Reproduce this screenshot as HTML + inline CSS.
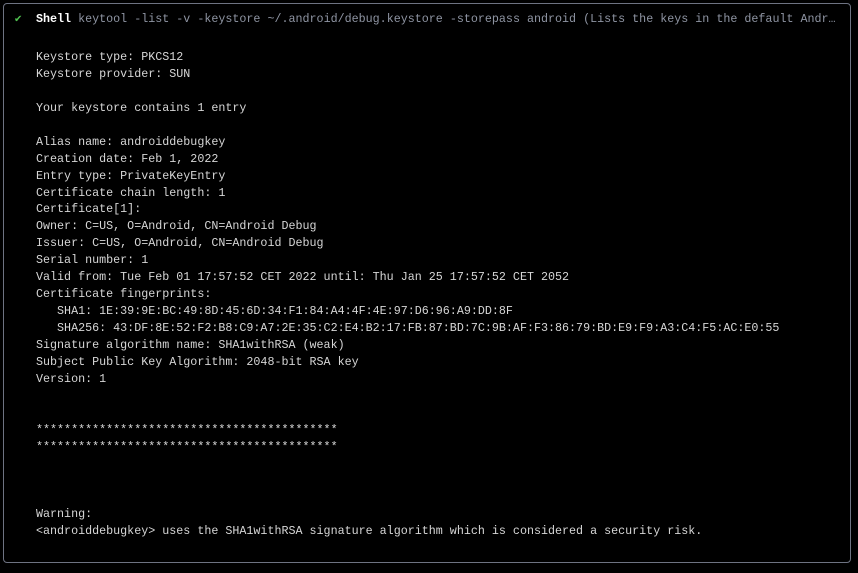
<!DOCTYPE html>
<html><head><meta charset="utf-8"><style>
html,body{margin:0;padding:0;background:#000;width:858px;height:573px;overflow:hidden}
.box{position:absolute;left:3px;top:3px;width:846px;height:558px;border:1px solid #6e7382;border-radius:4px}
.t{position:absolute;font-family:"Liberation Mono","DejaVu Sans Mono",monospace;font-size:11.7px;white-space:pre;color:#d6d6d6}
.hdr{left:36px;top:11px;line-height:17px}
.chk{position:absolute;left:14px;top:11px;line-height:17px;color:#4fc04f;font-size:10px;font-family:"DejaVu Sans",sans-serif}
.b{color:#fff;font-weight:bold}
.c{color:#8f95a3}
pre.t{margin:0;left:36px;top:49px;line-height:16.93px}
</style></head><body>
<div class="box"></div>
<div class="chk">✔</div>
<div class="t hdr"><span class="b">Shell</span> <span class="c">keytool -list -v -keystore ~/.android/debug.keystore -storepass android (Lists the keys in the default Andr…</span></div>
<pre class="t">Keystore type: PKCS12
Keystore provider: SUN

Your keystore contains 1 entry

Alias name: androiddebugkey
Creation date: Feb 1, 2022
Entry type: PrivateKeyEntry
Certificate chain length: 1
Certificate[1]:
Owner: C=US, O=Android, CN=Android Debug
Issuer: C=US, O=Android, CN=Android Debug
Serial number: 1
Valid from: Tue Feb 01 17:57:52 CET 2022 until: Thu Jan 25 17:57:52 CET 2052
Certificate fingerprints:
   SHA1: 1E:39:9E:BC:49:8D:45:6D:34:F1:84:A4:4F:4E:97:D6:96:A9:DD:8F
   SHA256: 43:DF:8E:52:F2:B8:C9:A7:2E:35:C2:E4:B2:17:FB:87:BD:7C:9B:AF:F3:86:79:BD:E9:F9:A3:C4:F5:AC:E0:55
Signature algorithm name: SHA1withRSA (weak)
Subject Public Key Algorithm: 2048-bit RSA key
Version: 1


*******************************************
*******************************************



Warning:
&lt;androiddebugkey&gt; uses the SHA1withRSA signature algorithm which is considered a security risk.</pre>
</body></html>
